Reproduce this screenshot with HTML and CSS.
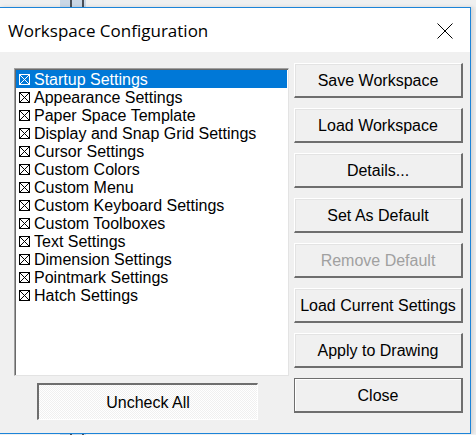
FILE: index.html
```html
<!DOCTYPE html>
<html>
<head>
<meta charset="utf-8">
<link rel="stylesheet" href="styles.css">
</head>
<body>
<div class="screen">
  <div class="backdrop"><div class="stub"><span></span><span></span></div></div>
  <div class="dialog">
    <div class="titlebar">
      <span class="title">Workspace Configuration</span>
      <svg class="close-x" width="16" height="16" viewBox="0 0 16 16"><path d="M0.5 0.5 L15.5 15.5 M15.5 0.5 L0.5 15.5" stroke="#000" stroke-width="1" fill="none"/></svg>
    </div>
    <div class="body">
      <div class="left">
        <ul class="list">
          <li class="sel"><svg class="cb" viewBox="0 0 11 11"><rect x="0.5" y="0.5" width="10" height="10"/><path d="M0.5 0.5 L10.5 10.5 M10.5 0.5 L0.5 10.5"/></svg>Startup Settings</li>
          <li><svg class="cb" viewBox="0 0 11 11"><rect x="0.5" y="0.5" width="10" height="10"/><path d="M0.5 0.5 L10.5 10.5 M10.5 0.5 L0.5 10.5"/></svg>Appearance Settings</li>
          <li><svg class="cb" viewBox="0 0 11 11"><rect x="0.5" y="0.5" width="10" height="10"/><path d="M0.5 0.5 L10.5 10.5 M10.5 0.5 L0.5 10.5"/></svg>Paper Space Template</li>
          <li><svg class="cb" viewBox="0 0 11 11"><rect x="0.5" y="0.5" width="10" height="10"/><path d="M0.5 0.5 L10.5 10.5 M10.5 0.5 L0.5 10.5"/></svg>Display and Snap Grid Settings</li>
          <li><svg class="cb" viewBox="0 0 11 11"><rect x="0.5" y="0.5" width="10" height="10"/><path d="M0.5 0.5 L10.5 10.5 M10.5 0.5 L0.5 10.5"/></svg>Cursor Settings</li>
          <li><svg class="cb" viewBox="0 0 11 11"><rect x="0.5" y="0.5" width="10" height="10"/><path d="M0.5 0.5 L10.5 10.5 M10.5 0.5 L0.5 10.5"/></svg>Custom Colors</li>
          <li><svg class="cb" viewBox="0 0 11 11"><rect x="0.5" y="0.5" width="10" height="10"/><path d="M0.5 0.5 L10.5 10.5 M10.5 0.5 L0.5 10.5"/></svg>Custom Menu</li>
          <li><svg class="cb" viewBox="0 0 11 11"><rect x="0.5" y="0.5" width="10" height="10"/><path d="M0.5 0.5 L10.5 10.5 M10.5 0.5 L0.5 10.5"/></svg>Custom Keyboard Settings</li>
          <li><svg class="cb" viewBox="0 0 11 11"><rect x="0.5" y="0.5" width="10" height="10"/><path d="M0.5 0.5 L10.5 10.5 M10.5 0.5 L0.5 10.5"/></svg>Custom Toolboxes</li>
          <li><svg class="cb" viewBox="0 0 11 11"><rect x="0.5" y="0.5" width="10" height="10"/><path d="M0.5 0.5 L10.5 10.5 M10.5 0.5 L0.5 10.5"/></svg>Text Settings</li>
          <li><svg class="cb" viewBox="0 0 11 11"><rect x="0.5" y="0.5" width="10" height="10"/><path d="M0.5 0.5 L10.5 10.5 M10.5 0.5 L0.5 10.5"/></svg>Dimension Settings</li>
          <li><svg class="cb" viewBox="0 0 11 11"><rect x="0.5" y="0.5" width="10" height="10"/><path d="M0.5 0.5 L10.5 10.5 M10.5 0.5 L0.5 10.5"/></svg>Pointmark Settings</li>
          <li><svg class="cb" viewBox="0 0 11 11"><rect x="0.5" y="0.5" width="10" height="10"/><path d="M0.5 0.5 L10.5 10.5 M10.5 0.5 L0.5 10.5"/></svg>Hatch Settings</li>
        </ul>
        <div class="uncheck">Uncheck All</div>
      </div>
      <div class="buttons">
        <div class="btn">Save Workspace</div>
        <div class="btn">Load Workspace</div>
        <div class="btn">Details...</div>
        <div class="btn">Set As Default</div>
        <div class="btn disabled">Remove Default</div>
        <div class="btn">Load Current Settings</div>
        <div class="btn">Apply to Drawing</div>
        <div class="btn default">Close</div>
      </div>
    </div>
  </div>
  <div class="backdrop bottom"><div class="stub"><span></span><span></span></div></div>
</div>
</body>
</html>
```

FILE: styles.css
```css
* { box-sizing: border-box; }
html, body { margin: 0; padding: 0; }
body { background: #f0f0f0; font-family: "Liberation Sans", Arial, sans-serif; }

.screen {
  width: 476px;
  height: 435px;
  display: flex;
  flex-direction: column;
  background: #eeeeee;
  overflow: hidden;
}

.backdrop {
  height: 7px;
  flex: none;
  background: #f0f0f0;
}
.backdrop.bottom { height: 2px; }
.stub {
  margin-left: 60px;
  width: 26px;
  height: 100%;
  display: flex;
  background: #c9d7e6;
}
.stub span { width: 12px; border-right: 2px solid #4a4f57; }

.dialog {
  width: 471px;
  height: 427px;
  flex: none;
  border: 1px solid #1c84d8;
  border-left: none;
  background: #f0f0f0;
  display: flex;
  flex-direction: column;
  box-shadow: 2px 0 4px rgba(0,0,0,0.12);
}

.titlebar {
  height: 44px;
  background: #fff;
  display: flex;
  align-items: center;
  justify-content: space-between;
  padding: 0 17px 0 8px;
  flex: none;
}
.title {
  font-family: "Open Sans", "Noto Sans", sans-serif;
  font-size: 17px;
  color: #000;
  margin-top: 1px;
}
.close-x { display: block; margin-top: 1px; }

.body {
  display: flex;
  padding: 0 0 0 14px;
  flex: 1;
}

.left {
  display: flex;
  flex-direction: column;
  padding-top: 16px;
}

.list {
  list-style: none;
  margin: 0;
  padding: 0;
  width: 275px;
  height: 308px;
  background: #fff;
  border-style: solid;
  border-width: 1px 1px 1px 1px;
  border-color: #a0a0a0 #e3e3e3 #e3e3e3 #a0a0a0;
  box-shadow: inset 1px 1px 0 #696969;
  padding: 1px 0 0 1px;
}
.list li {
  height: 18px;
  display: flex;
  align-items: center;
  font-size: 16px;
  color: #000;
  white-space: nowrap;
  padding-left: 3px;
  padding-top: 1px;
}
.list li.sel { background: #0078d7; color: #fff; margin-right: 1px; }
.cb {
  width: 11px;
  height: 11px;
  margin-right: 4px;
  flex: none;
}
.cb rect, .cb path { fill: none; stroke: currentColor; stroke-width: 1; }

.uncheck {
  margin: 7px 0 0 23px;
  width: 221px;
  height: 37px;
  display: flex;
  align-items: center;
  justify-content: center;
  font-size: 16px;
  color: #000;
  border-style: solid;
  border-width: 2px 1px 1px 2px;
  border-color: #6e6e6e #fff #fff #6e6e6e;
  background-color: #f4f4f4;
  background-image: repeating-conic-gradient(#ffffff 0 25%, #f0f0f0 0 50%);
  background-size: 2px 2px;
  padding-top: 2px;
}

.buttons {
  display: flex;
  flex-direction: column;
  gap: 10px;
  padding-top: 11px;
  margin-left: 5px;
}
.btn {
  width: 169px;
  height: 35px;
  display: flex;
  align-items: center;
  justify-content: center;
  font-size: 16px;
  color: #000;
  background: #f0f0f0;
  border-style: solid;
  border-width: 1px 2px 2px 1px;
  border-color: #fff #6e6e6e #6e6e6e #fff;
  box-shadow: inset 1px 1px 0 #e3e3e3;
  white-space: nowrap;
  padding-top: 2px;
}
.btn.disabled { color: #a0a0a0; }
.btn.default {
  border: 2px solid #6e6e6e;
  border-top-width: 1px;
  border-left-width: 1px;
  box-shadow: inset 1px 1px 0 #fff;
}
```
